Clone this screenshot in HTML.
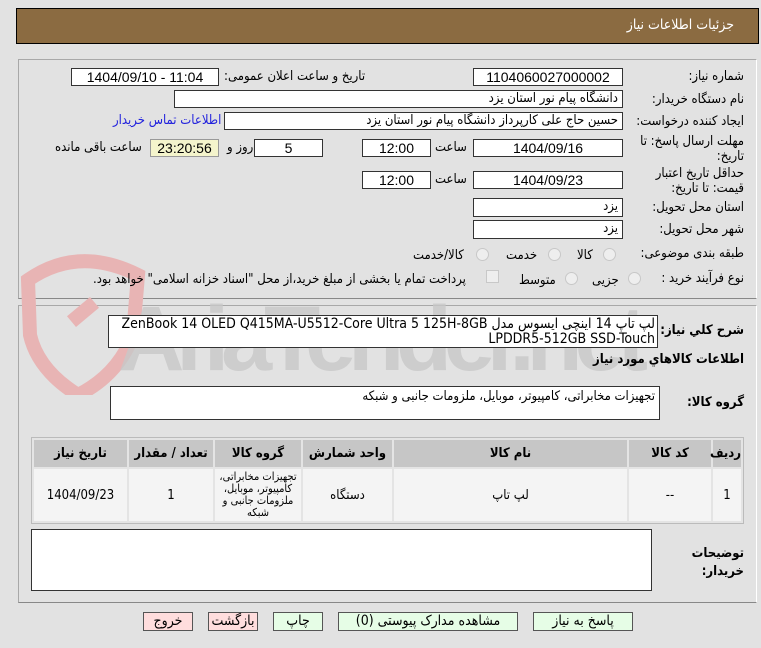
<!DOCTYPE html>
<html><head><meta charset="utf-8"><style>
*{box-sizing:border-box;margin:0;padding:0}
body{width:761px;height:648px;background:#e2e2e2;position:relative;overflow:hidden;font-family:"DejaVu Sans Condensed","DejaVu Sans","Liberation Sans",sans-serif;font-size:13px;color:#000}
.a{position:absolute}
.hdr{left:16px;top:8px;width:743px;height:36px;background:#8b6b41;border:1px solid #000}
.hdr span{position:absolute;right:24px;top:8px;color:#fff;font-size:14px}
.pn{border:1px solid #a8a8a8;border-right-color:#fff;border-bottom-color:#888}
.in{position:absolute;background:#fff;border:1px solid #333;height:18px;font-size:14px;line-height:16px;text-align:center;font-family:"Liberation Sans Narrow","Liberation Sans",sans-serif}
.in.r{text-align:right;padding-right:4px;font-family:"DejaVu Sans Condensed","DejaVu Sans",sans-serif;font-size:13px}
.l{position:absolute;white-space:nowrap;direction:rtl}
.rad{position:absolute;width:13px;height:13px;border-radius:50%;border:1px solid #c8c8c8;background:#eee}
.ta{position:absolute;background:#fff;border:1px solid #333;direction:rtl;text-align:right;padding:2px 4px;font-size:13px}
table{border-collapse:separate;border-spacing:2px;font-size:13px;table-layout:fixed}
th{background:#c6c6c6;height:27px;font-weight:bold}
td{background:#f4f4f4;height:52px;text-align:center;padding:0}
.b{position:absolute;top:612px;height:19px;border:1px solid #555;background:#e6fde6;text-align:center;line-height:17px;font-size:14px;direction:rtl}
</style></head><body>
<div class="a hdr"><span>جزئیات اطلاعات نیاز</span></div>
<div class="a pn" style="left:18px;top:59px;width:739px;height:240px"></div>
<div class="a pn" style="left:18px;top:305px;width:739px;height:298px"></div>
<svg class="a" style="left:18px;top:245px" width="640" height="150">
<path d="M10 35 Q60 0 120 30 L115 90 Q100 130 60 150 Q20 125 12 90 Z" fill="none" stroke="#e8b4b4" stroke-width="14"/>
<rect x="50" y="60" width="30" height="14" fill="#e8b4b4" transform="rotate(-40 65 67)"/>
<text x="100" y="125" font-family="Liberation Sans" font-weight="bold" font-size="92" fill="#c8c8c8" opacity=".8" textLength="530">AriaTender.net</text>
</svg>
<div class="l" style="right:17px;top:69px">شماره نیاز:</div>
<div class="in" style="left:473px;top:68px;width:150px">1104060027000002</div>
<div class="l" style="left:224px;top:69px">تاریخ و ساعت اعلان عمومی:</div>
<div class="in" style="left:71px;top:68px;width:148px">1404/09/10 - 11:04</div>
<div class="l" style="right:17px;top:92px">نام دستگاه خریدار:</div>
<div class="in r" style="left:174px;top:90px;width:449px">دانشگاه پیام نور استان یزد</div>
<div class="l" style="right:17px;top:114px">ایجاد کننده درخواست:</div>
<div class="in r" style="left:224px;top:112px;width:399px">حسین حاج علی کارپرداز دانشگاه پیام نور استان یزد</div>
<div class="l" style="left:113px;top:113px;color:#2222dd">اطلاعات تماس خریدار</div>
<div class="l" style="right:17px;top:134px;text-align:right;line-height:15px">مهلت ارسال پاسخ: تا<br>تاریخ:</div>
<div class="in" style="left:473px;top:139px;width:150px">1404/09/16</div>
<div class="l" style="left:435px;top:140px">ساعت</div>
<div class="in" style="left:362px;top:139px;width:69px">12:00</div>
<div class="in" style="left:254px;top:139px;width:69px">5</div>
<div class="l" style="left:227px;top:140px">روز و</div>
<div class="in" style="left:150px;top:139px;width:69px;background:#f4f4cc;border-color:#999">23:20:56</div>
<div class="l" style="left:55px;top:140px">ساعت باقی مانده</div>
<div class="l" style="right:17px;top:166px;text-align:right;line-height:15px">حداقل تاریخ اعتبار<br>قیمت: تا تاریخ:</div>
<div class="in" style="left:473px;top:171px;width:150px">1404/09/23</div>
<div class="l" style="left:435px;top:172px">ساعت</div>
<div class="in" style="left:362px;top:171px;width:69px">12:00</div>
<div class="l" style="right:17px;top:200px">استان محل تحویل:</div>
<div class="in r" style="left:473px;top:198px;width:150px;height:19px">یزد</div>
<div class="l" style="right:17px;top:222px">شهر محل تحویل:</div>
<div class="in r" style="left:473px;top:220px;width:150px;height:19px">یزد</div>
<div class="l" style="right:17px;top:246px">طبقه بندی موضوعی:</div>
<div class="rad" style="left:603px;top:248px"></div><div class="l" style="left:577px;top:248px">کالا</div>
<div class="rad" style="left:548px;top:248px"></div><div class="l" style="left:506px;top:248px">خدمت</div>
<div class="rad" style="left:476px;top:248px"></div><div class="l" style="left:413px;top:248px">کالا/خدمت</div>
<div class="l" style="right:17px;top:271px">نوع فرآیند خرید :</div>
<div class="rad" style="left:628px;top:272px"></div><div class="l" style="left:592px;top:273px">جزیی</div>
<div class="rad" style="left:565px;top:272px"></div><div class="l" style="left:519px;top:273px">متوسط</div>
<div class="a" style="left:486px;top:270px;width:13px;height:13px;border:1px solid #c8c8c8;background:#eee"></div>
<div class="l" style="left:93px;top:272px">پرداخت تمام یا بخشی از مبلغ خرید،از محل "اسناد خزانه اسلامی" خواهد بود.</div>
<div class="l" style="right:17px;top:323px;font-weight:bold;font-size:13px">شرح کلي نياز:</div>
<div class="ta" style="left:108px;top:315px;width:550px;height:33px;line-height:15px;padding:1px 2px;font-family:'Liberation Sans Narrow','DejaVu Sans Condensed',sans-serif;font-size:14px">لپ تاپ 14 اینچی ایسوس مدل ZenBook 14 OLED Q415MA-U5512-Core Ultra 5 125H-8GB LPDDR5-512GB SSD-Touch</div>
<div class="l" style="right:17px;top:352px;font-weight:bold;font-size:13px">اطلاعات کالاهاي مورد نياز</div>
<div class="l" style="right:17px;top:395px;font-weight:bold;font-size:13px">گروه کالا:</div>
<div class="ta" style="left:110px;top:386px;width:550px;height:34px">تجهیزات مخابراتی، کامپیوتر، موبایل، ملزومات جانبی و شبکه</div>
<table class="a" dir="rtl" style="left:31px;top:437px;width:713px;border:1px solid #bbb;background:#e4e4e4">
<colgroup><col style="width:28px"><col style="width:82px"><col><col style="width:89px"><col style="width:86px"><col style="width:84px"><col style="width:93px"></colgroup>
<tr><th>ردیف</th><th>کد کالا</th><th>نام کالا</th><th>واحد شمارش</th><th>گروه کالا</th><th>تعداد / مقدار</th><th>تاریخ نیاز</th></tr>
<tr><td>1</td><td>--</td><td>لپ تاپ</td><td>دستگاه</td><td style="line-height:12px;font-size:11px">تجهیزات مخابراتی، کامپیوتر، موبایل، ملزومات جانبی و شبکه</td><td>1</td><td>1404/09/23</td></tr>
</table>
<div class="ta" style="left:31px;top:529px;width:621px;height:62px"></div>
<div class="l" style="right:17px;top:545px;font-weight:bold;font-size:13px;text-align:right;line-height:18px">توضیحات<br>خریدار:</div>
<div class="b" style="left:533px;width:100px">پاسخ به نیاز</div>
<div class="b" style="left:338px;width:180px">مشاهده مدارک پیوستی (0)</div>
<div class="b" style="left:273px;width:50px">چاپ</div>
<div class="b" style="left:208px;width:50px;background:#fdd">بازگشت</div>
<div class="b" style="left:143px;width:50px;background:#fdd">خروج</div>
</body></html>
